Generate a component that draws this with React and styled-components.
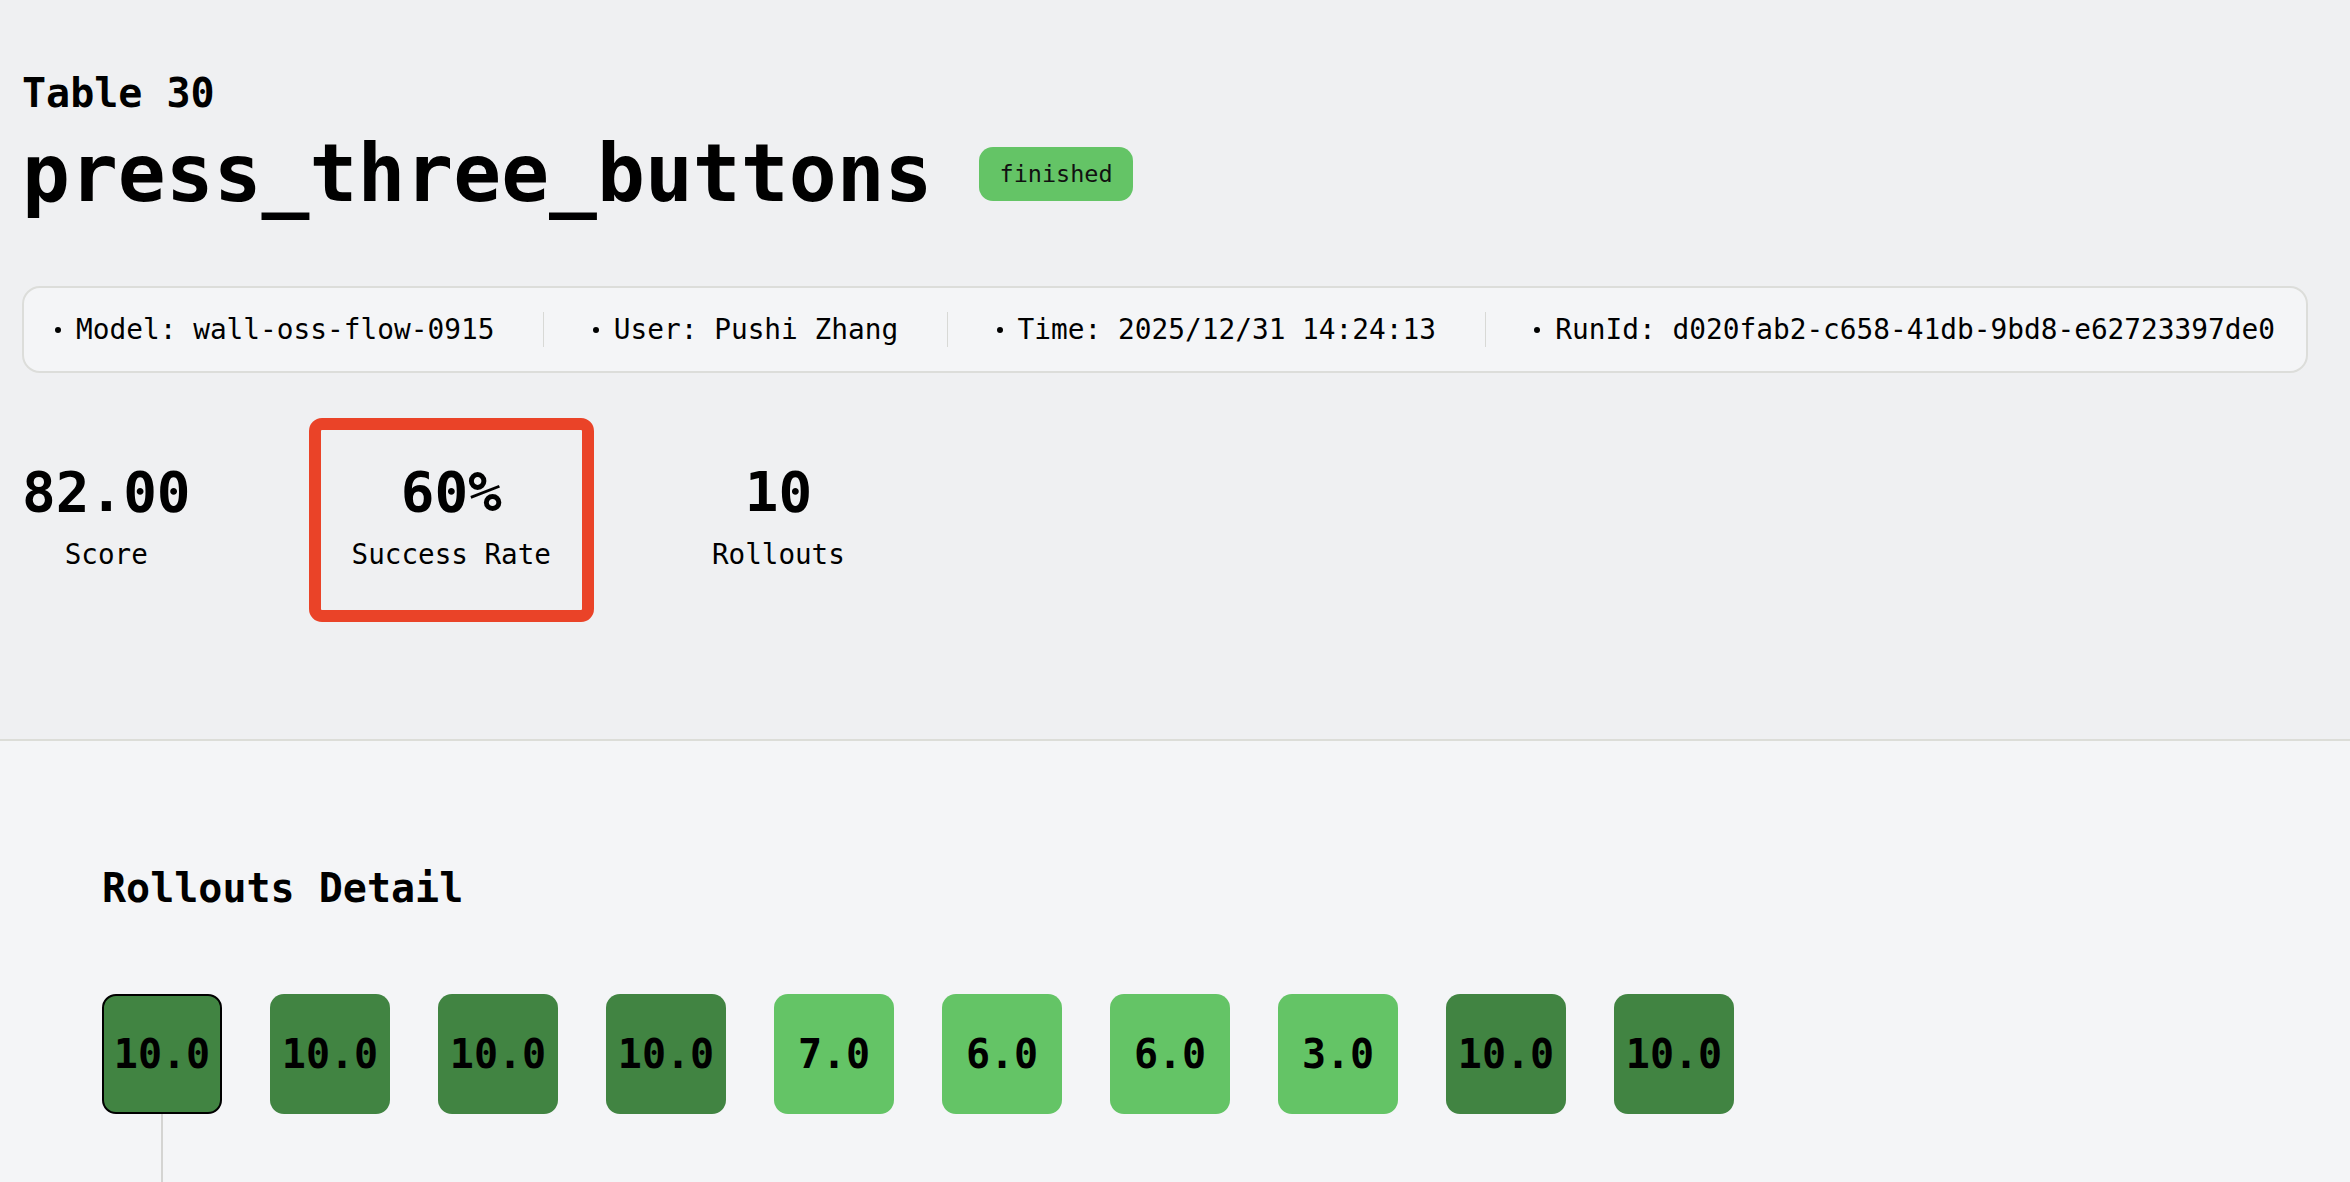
import React from 'react'
import styled, { createGlobalStyle, css } from 'styled-components'

const GlobalStyle = createGlobalStyle`
html, body {
  margin: 0;
  padding: 0;
  overflow: hidden;
}
body {
  background: #f4f5f7;
  color: #000;
  font-family: "DejaVu Sans Mono", "Liberation Mono", monospace;
}
`

const Header = styled('header')`
  box-sizing: border-box;
  height: 741px;
  padding: 69px 42px 0 22px;
  background: #eff0f2;
  border-bottom: 2px solid #dcddd8;
`
const Subtitle = styled('div')`
  font-size: 40px;
  line-height: 48px;
  font-weight: 700;
`
const TitleRow = styled('div')`
  display: flex;
  align-items: center;
  gap: 47px;
  margin-top: 9px;
`
const Title = styled('h1')`
  margin: 0;
  font-size: 79.6px;
  line-height: 96px;
  font-weight: 700;
`
const Badge = styled('span')`
  height: 54px;
  line-height: 54px;
  padding: 0 20px;
  border-radius: 14px;
  background: #64c466;
  font-size: 23.5px;
  color: #111;
`
const InfoBar = styled('div')`
  box-sizing: border-box;
  display: flex;
  align-items: center;
  gap: 49px;
  height: 87px;
  margin-top: 64px;
  padding: 0 31px;
  background: #f4f5f7;
  border: 2px solid #dcddda;
  border-radius: 18px;
  font-size: 27.8px;
`
const InfoItem = styled('div')`
  display: flex;
  align-items: center;
  white-space: nowrap;
  &::before {
    content: '';
    width: 6px;
    height: 6px;
    margin-right: 15px;
    border-radius: 50%;
    background: #000;
  }
`
const Sep = styled('span')`
  width: 2px;
  height: 35px;
  background: #d8d9d6;
`
const Stats = styled('div')`
  display: flex;
  gap: 161px;
  margin-top: 85px;
`
const Stat = styled('div')`
  position: relative;
  display: flex;
  flex-direction: column;
  align-items: center;
  ${(p) =>
    p.$highlight &&
    css`
      &::after {
        content: '';
        position: absolute;
        left: -43px;
        right: -43px;
        top: -40px;
        bottom: -51px;
        border: 12px solid #ea4328;
        border-radius: 13px;
      }
    `}
`
const StatValue = styled('div')`
  font-size: 56px;
  line-height: 68px;
  font-weight: 700;
`
const StatLabel = styled('div')`
  margin-top: 12px;
  font-size: 27.6px;
  line-height: 33px;
`
const Detail = styled('section')`
  padding: 123px 102px 0;
`
const Heading = styled('h2')`
  margin: 0;
  font-size: 40px;
  line-height: 48px;
  font-weight: 700;
`
const RolloutRow = styled('div')`
  display: flex;
  gap: 48px;
  margin-top: 82px;
`
const Rollout = styled('div')`
  display: flex;
  flex-direction: column;
  align-items: center;
`
const ScoreBox = styled('div')`
  box-sizing: border-box;
  width: 120px;
  height: 120px;
  display: flex;
  align-items: center;
  justify-content: center;
  border-radius: 14px;
  font-size: 40px;
  font-weight: 700;
  background: ${(p) => (p.$full ? '#418442' : '#64c466')};
  border: ${(p) => (p.$selected ? '2px solid #000' : 'none')};
`
const Stem = styled('div')`
  width: 2px;
  height: 70px;
  background: #d4d4d2;
`

const info = [
  'Model: wall-oss-flow-0915',
  'User: Pushi Zhang',
  'Time: 2025/12/31 14:24:13',
  'RunId: d020fab2-c658-41db-9bd8-e62723397de0',
]
const scores = [10, 10, 10, 10, 7, 6, 6, 3, 10, 10]

export default function App() {
  return (
    <>
      <GlobalStyle />
      <Header>
        <Subtitle>Table 30</Subtitle>
        <TitleRow>
          <Title>press_three_buttons</Title>
          <Badge>finished</Badge>
        </TitleRow>
        <InfoBar>
          {info.map((t, i) => (
            <React.Fragment key={t}>
              {i > 0 && <Sep />}
              <InfoItem>{t}</InfoItem>
            </React.Fragment>
          ))}
        </InfoBar>
        <Stats>
          <Stat>
            <StatValue>82.00</StatValue>
            <StatLabel>Score</StatLabel>
          </Stat>
          <Stat $highlight>
            <StatValue>60%</StatValue>
            <StatLabel>Success Rate</StatLabel>
          </Stat>
          <Stat>
            <StatValue>10</StatValue>
            <StatLabel>Rollouts</StatLabel>
          </Stat>
        </Stats>
      </Header>
      <Detail>
        <Heading>Rollouts Detail</Heading>
        <RolloutRow>
          {scores.map((s, i) => (
            <Rollout key={i}>
              <ScoreBox $full={s === 10} $selected={i === 0}>
                {s.toFixed(1)}
              </ScoreBox>
              {i === 0 && <Stem />}
            </Rollout>
          ))}
        </RolloutRow>
      </Detail>
    </>
  )
}
